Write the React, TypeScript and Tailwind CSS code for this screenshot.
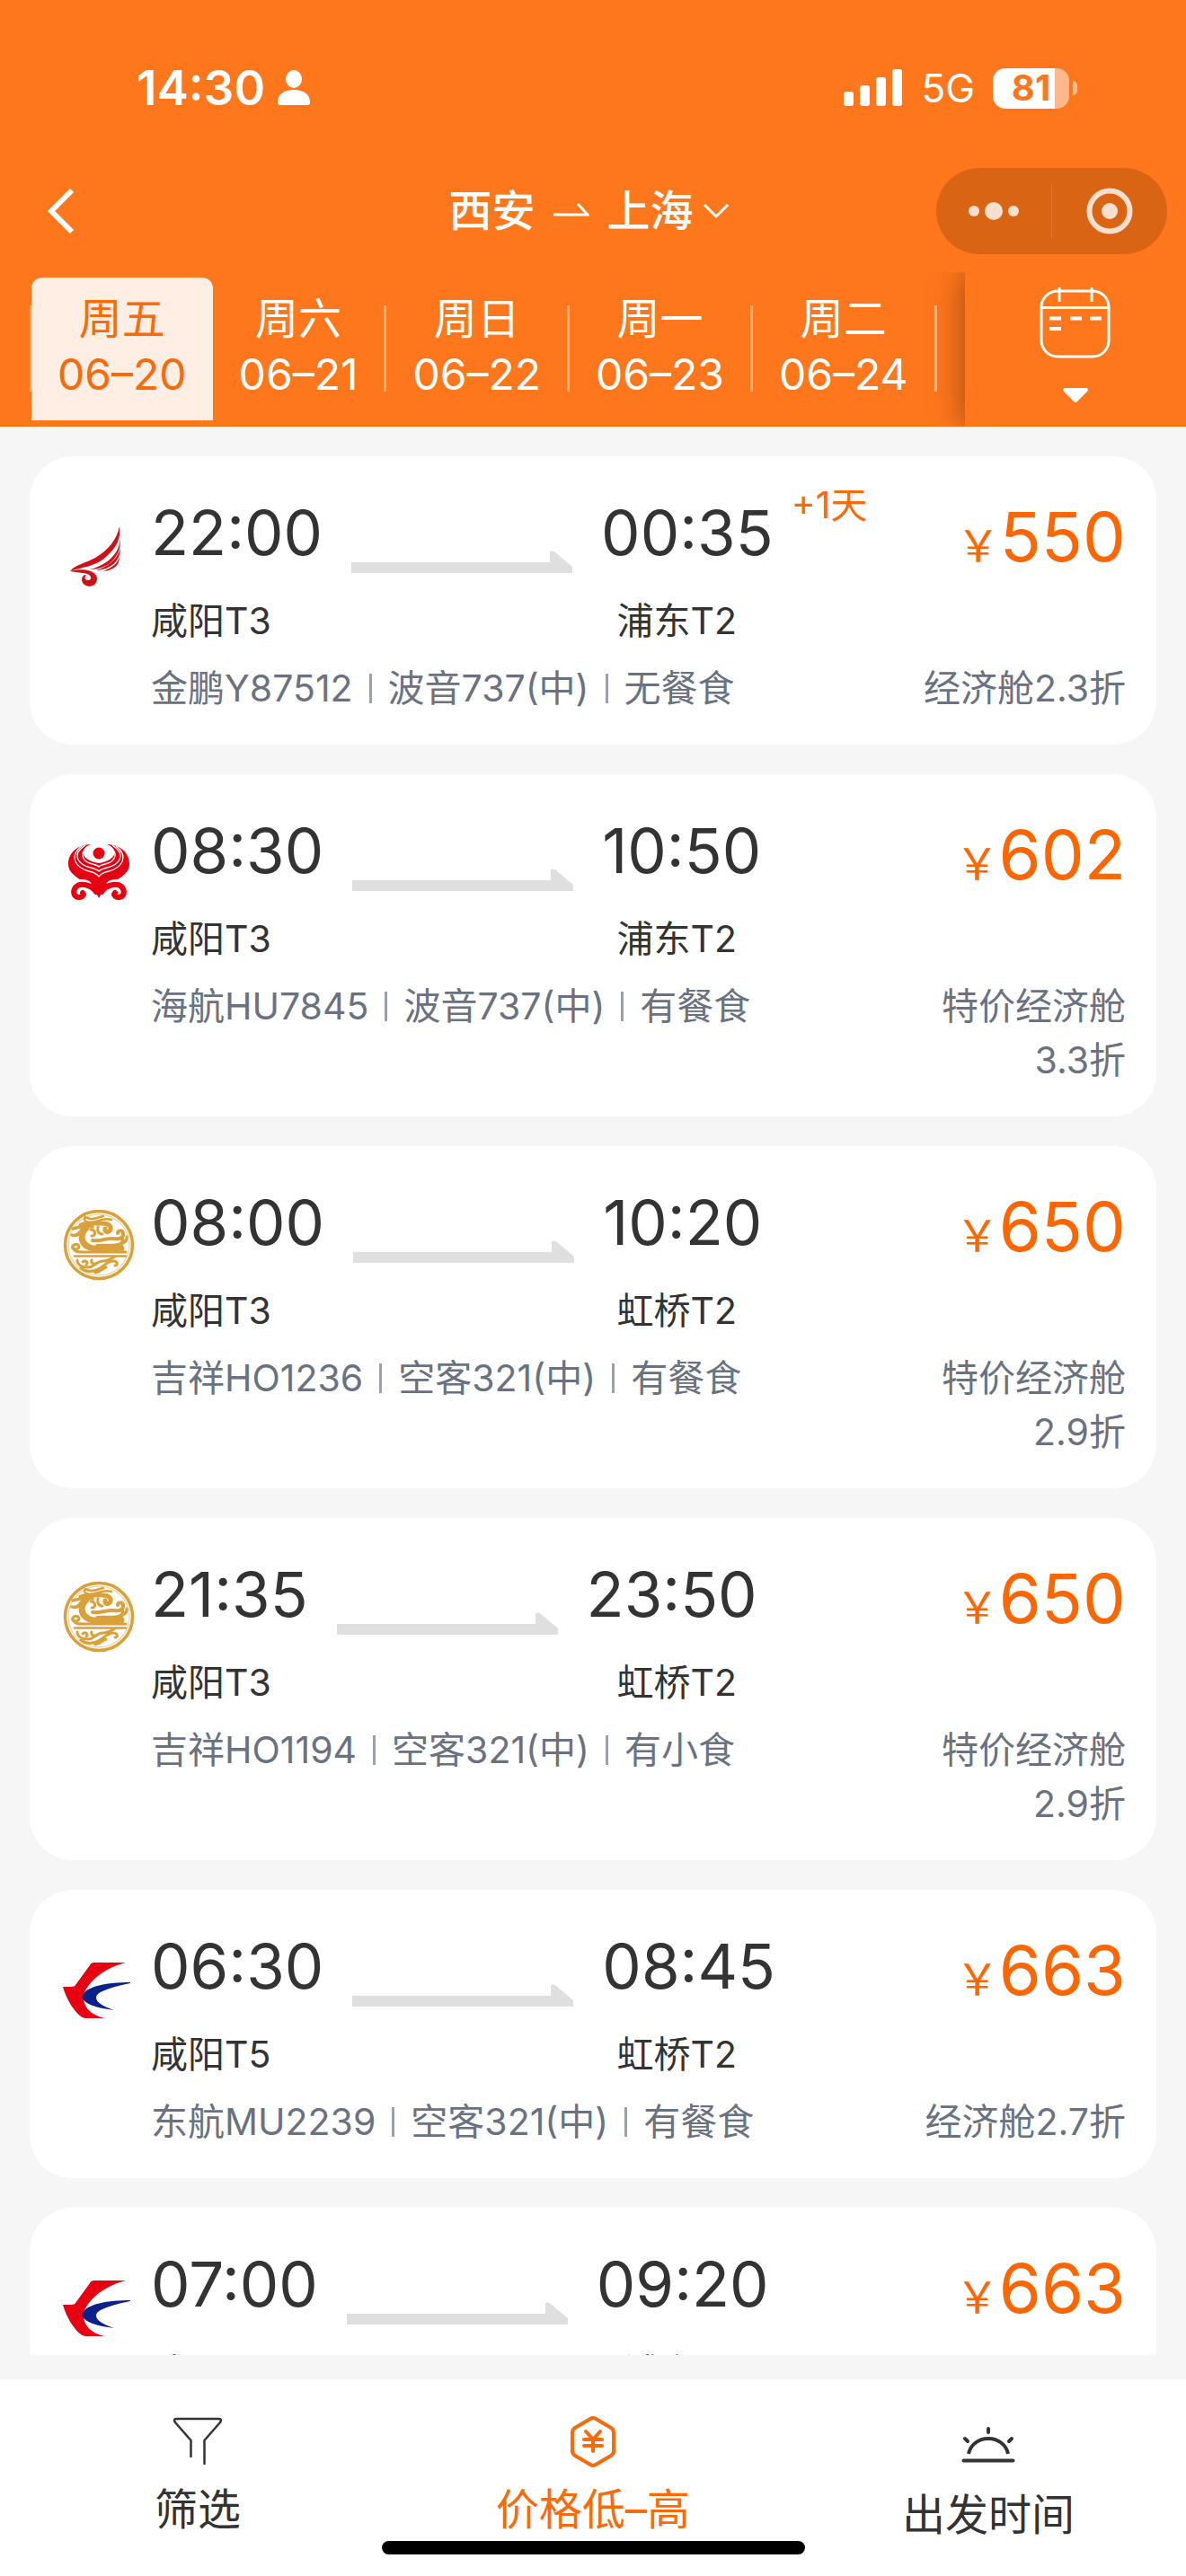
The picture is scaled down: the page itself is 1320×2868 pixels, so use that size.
import React from "react";
import clsx from "clsx";

type Airline = "jinpeng" | "hainan" | "juneyao" | "eastern";

type Flight = {
  airline: Airline;
  depart: string;
  arrive: string;
  plusDay?: string;
  from: string;
  to: string;
  info: string[];
  price: number;
  cabin: string;
};

const DAYS = [
  { week: "周五", date: "06–20" },
  { week: "周六", date: "06–21" },
  { week: "周日", date: "06–22" },
  { week: "周一", date: "06–23" },
  { week: "周二", date: "06–24" },
];

const FLIGHTS: Flight[] = [
  {
    airline: "jinpeng",
    depart: "22:00",
    arrive: "00:35",
    plusDay: "+1天",
    from: "咸阳T3",
    to: "浦东T2",
    info: ["金鹏Y87512", "波音737(中)", "无餐食"],
    price: 550,
    cabin: "经济舱2.3折",
  },
  {
    airline: "hainan",
    depart: "08:30",
    arrive: "10:50",
    from: "咸阳T3",
    to: "浦东T2",
    info: ["海航HU7845", "波音737(中)", "有餐食"],
    price: 602,
    cabin: "特价经济舱3.3折",
  },
  {
    airline: "juneyao",
    depart: "08:00",
    arrive: "10:20",
    from: "咸阳T3",
    to: "虹桥T2",
    info: ["吉祥HO1236", "空客321(中)", "有餐食"],
    price: 650,
    cabin: "特价经济舱2.9折",
  },
  {
    airline: "juneyao",
    depart: "21:35",
    arrive: "23:50",
    from: "咸阳T3",
    to: "虹桥T2",
    info: ["吉祥HO1194", "空客321(中)", "有小食"],
    price: 650,
    cabin: "特价经济舱2.9折",
  },
  {
    airline: "eastern",
    depart: "06:30",
    arrive: "08:45",
    from: "咸阳T5",
    to: "虹桥T2",
    info: ["东航MU2239", "空客321(中)", "有餐食"],
    price: 663,
    cabin: "经济舱2.7折",
  },
  {
    airline: "eastern",
    depart: "07:00",
    arrive: "09:20",
    from: "咸阳T5",
    to: "浦东T1",
    info: ["东航MU2151", "空客321(中)", "有餐食"],
    price: 663,
    cabin: "经济舱2.7折",
  },
];

function StatusBar() {
  return (
    <div className="flex items-center justify-between pt-[62px] pr-[121px] pl-[152px] leading-[72px]">
      <div className="flex items-center gap-3.5">
        <span className="text-[53px] font-semibold">14:30</span>
        <svg width="36" height="40" viewBox="0 0 36 40" fill="currentColor">
          <ellipse cx="18" cy="10" rx="9" ry="10" />
          <path d="M0 36C0 27 7 22 18 22s18 5 18 14c0 2-1 3-3 3H3c-2 0-3-1-3-3Z" />
        </svg>
      </div>
      <div className="flex items-center">
        <svg width="66" height="42" viewBox="0 0 66 42" fill="currentColor">
          <rect x="0" y="25" width="11" height="16" rx="3" />
          <rect x="18" y="18" width="11" height="23" rx="3" />
          <rect x="36" y="9" width="11" height="32" rx="3" />
          <rect x="54" y="0" width="11" height="41" rx="3" />
        </svg>
        <span className="ml-5 text-[44px]">5G</span>
        <div className="ml-5 flex items-center gap-1">
          <div className="flex h-[45px] w-[85px] items-center justify-center rounded-[14px] bg-[linear-gradient(90deg,#fff_81%,#ffb88c_81%)] text-[40px] font-bold text-[#ff771c]">
            81
          </div>
          <div className="h-4 w-[5px] rounded-r-full bg-[#ffb88c]" />
        </div>
      </div>
    </div>
  );
}

function TitleBar() {
  return (
    <div className="mt-[53px] grid h-24 grid-cols-[1fr_auto_1fr] items-center pr-[21px] pl-3">
      <button className="ml-10 justify-self-start" aria-label="返回">
        <svg
          width="32"
          height="52"
          viewBox="0 0 32 52"
          fill="none"
          stroke="currentColor"
          strokeWidth="6"
        >
          <path d="M28 3 5 26l23 23" />
        </svg>
      </button>
      <button className="flex items-center text-[48px] font-medium">
        西安
        <svg
          className="mx-5"
          width="40"
          height="18"
          viewBox="0 0 40 18"
          fill="none"
          stroke="currentColor"
          strokeWidth="3"
        >
          <path d="M0 13h38L27 1" />
        </svg>
        上海
        <svg
          className="ml-2.5"
          width="30"
          height="18"
          viewBox="0 0 30 18"
          fill="none"
          stroke="currentColor"
          strokeWidth="3"
        >
          <path d="m2 2 13 13L28 2" />
        </svg>
      </button>
      <div className="flex h-24 w-[257px] items-center justify-self-end rounded-full bg-[#d86414] text-[#f9dfd0]">
        <button className="flex flex-1 justify-center" aria-label="更多">
          <svg width="60" height="24" viewBox="0 0 60 24" fill="currentColor">
            <circle cx="8" cy="12" r="6" />
            <circle cx="30" cy="12" r="10" />
            <circle cx="52" cy="12" r="6" />
          </svg>
        </button>
        <div className="h-[60px] w-px bg-[#e07c3a]" />
        <button className="flex flex-1 justify-center" aria-label="关闭">
          <svg width="54" height="54" viewBox="0 0 54 54" fill="none">
            <circle
              cx="27"
              cy="27"
              r="22.500"
              stroke="currentColor"
              strokeWidth="6"
            />
            <circle cx="27" cy="27" r="9" fill="currentColor" />
          </svg>
        </button>
      </div>
    </div>
  );
}

function DateTabs() {
  return (
    <div className="mt-5 flex h-[172px] overflow-hidden">
      <div className="ml-[33px] flex flex-1 items-start">
        <div className="mt-[37px] h-24 w-0.5 bg-[#ffb27a]" />
        {DAYS.map((d, i) => (
          <React.Fragment key={d.date}>
            <button
              className={clsx(
                "mt-1.5 flex h-[159px] flex-col items-center px-[29px] pt-[15px] text-[48px] leading-[62px]",
                i === 0 && "rounded-t-xl bg-[#ffeee4] text-[#f96a0a]",
              )}
            >
              <span>{d.week}</span>
              <span>{d.date}</span>
            </button>
            {i > 0 && <div className="mt-[37px] h-24 w-[3px] bg-[#ffb27a]" />}
          </React.Fragment>
        ))}
      </div>
      <button
        className="flex w-[246px] flex-col items-center pt-4 shadow-[0_0_36px_0_rgba(0,0,0,0.4)]"
        aria-label="选择日期"
      >
        <svg
          width="80"
          height="80"
          viewBox="0 0 80 80"
          fill="none"
          stroke="currentColor"
          strokeWidth="3"
        >
          <rect x="2" y="5" width="75" height="73" rx="18" />
          <path d="M2 23.500h75M22 1v16M58 1v16" />
          <path d="M11 35.500h13M34 35.500h13M56 35.500h13M11 47h13" strokeWidth="4" />
        </svg>
        <svg
          className="mt-8"
          width="30"
          height="18"
          viewBox="0 0 30 18"
          fill="currentColor"
          stroke="currentColor"
          strokeWidth="4"
          strokeLinejoin="round"
        >
          <path d="M3 3h24L15 15Z" />
        </svg>
      </button>
    </div>
  );
}

function AirlineLogo({ airline }: { airline: Airline }) {
  if (airline === "jinpeng") {
    return (
      <svg width="80" height="80" viewBox="0 0 80 80" fill="none">
        <g fill="#cf1016">
          <path d="M63 8C60 23 50 35 36 43 25 49 13 51 8 58c14-5 29-5 41-17C59 32 65 22 63 8Z" />
          <path d="M64 21c-1 17-14 30-34 35 22 0 35-15 34-35Z" />
          <path d="M64 32c-3 12-13 21-27 25 17-1 27-11 27-25Z" />
          <path d="M63 42c-2 8-9 12-18 16 12-1 18-7 18-16Z" />
          <path d="M8 58c10-3 29-3 30 8 0 8-8 11-14 7-5-4-3-12 2-11-3 3-1 6 2 6 4 0 4-4 1-6-4-3-13-2-21-4Z" />
        </g>
      </svg>
    );
  }
  if (airline === "hainan") {
    return (
      <svg width="80" height="80" viewBox="0 0 80 80" fill="none">
        <path
          fill="#e60012"
          d="M31 8C14 9 6 19 6 30c0 16 24 18 34 36 10-18 34-20 34-36C74 19 66 9 49 8c12 5 13 17-9 21C18 25 19 13 31 8Z"
        />
        <circle cx="40" cy="18" r="6.500" fill="#e60012" />
        <g stroke="#fff" strokeWidth="1.300">
          <path d="M25 9C8 20 18 31 31 34c4 1 7 2 9 4 2-2 5-3 9-4 13-3 23-14 6-25" />
          <path d="M21 10C6 21 14 34 29 38c5 1 9 3 11 6 2-3 6-5 11-6 15-4 23-17 8-28" />
          <path d="M28 10c-12 10-4 18 5 20 4 1 6 2 7 3 1-1 3-2 7-3 9-2 17-10 5-20" />
        </g>
        <g stroke="#fff" strokeWidth="8">
          <path d="M37 64C33 52 20 47 13 55" />
          <path d="M43 64c4-12 17-17 24-9" />
        </g>
        <path d="M29 47h22L40 68Z" fill="#e60012" />
        <g stroke="#e60012" strokeWidth="6" strokeLinecap="round">
          <path d="M37 61C32 53 19 50 14 56c-4 6-1 11 4 11 4 0 6-3 4-5" />
          <path d="M43 61c5-8 18-11 23-5 4 6 1 11-4 11-4 0-6-3-4-5" />
        </g>
      </svg>
    );
  }
  if (airline === "juneyao") {
    return (
      <svg
        width="80"
        height="80"
        viewBox="0 0 80 80"
        fill="none"
        stroke="#d9a13b"
        strokeLinecap="round"
        strokeLinejoin="round"
      >
        <circle cx="40" cy="40" r="37.500" strokeWidth="3.500" />
        <circle cx="40" cy="40" r="34" stroke="#f0d9ab" strokeWidth="1.500" />
        <path d="M54 12c-9-3-16 3-23 3-5 0-9-3-6-6 6 4 13 1 20-1" strokeWidth="2.500" />
        <path d="M20 18c6-3 14-2 22-2 8 0 12 2 11 7-2 4-7 3-6-1" strokeWidth="5" />
        <path d="M11 22c8-2 15-4 22-2M10 29c5 2 8-1 11-6" strokeWidth="3.500" />
        <path d="M26 21c-8 8-6 18 4 22 10 3 24 2 34 0" strokeWidth="7" />
        <path d="M31 23c6 0 6 7 1 7M39 20c-1 5 1 8 5 8" strokeWidth="3" />
        <path d="M33 35c10 1 16-3 24-2 6 1 11-1 10-6-1-4-6-3-6 0M38 41c10-1 20 1 26-2 5-3 3-7-2-6" strokeWidth="4" />
        <path d="M71 31c1 5-3 7-7 8M60 40c5 0 9 3 6 6" strokeWidth="3" />
        <path d="M11 41c4-4 9 0 6 3-4 2-8 0-6-3 0 8 8 7 16 7h43" strokeWidth="3" />
        <path d="M13 52.500h57" strokeWidth="2.500" />
        <path d="M16 57c0 6 7 8 12 8 8 0 8-7 17-7 6 0 9-3 13-5" strokeWidth="3" />
        <path d="M22 59c3-3 7 1 4 3M32 57c-1 3 2 5 5 4M20 66c8 6 16 3 21 0 5-3 9-8 15-8 5 0 6 5 2 5M36 71c6-1 8-5 12-6" strokeWidth="3" />
      </svg>
    );
  }
  return (
    <svg width="80" height="80" viewBox="0 0 80 80" fill="none">
      <path
        fill="#e60012"
        d="M70 11H35c-3 0-4 1-5 3L14 36c-1 2-3 2-14 2 4 14 12 27 20 33 3 2 5 2 8 2h18C30 69 22 60 23 47 28 32 46 17 70 11Z"
      />
      <path
        fill="#0b2088"
        d="M75 33c-24 0-50 4-53 15-2 9 18 14 35 16-14-5-20-9-20-14 0-7 19-12 38-16Z"
      />
    </svg>
  );
}

function FlightCard({ flight }: { flight: Flight }) {
  return (
    <li className="flex shrink-0 gap-[18px] rounded-[48px] bg-white pt-10 pr-[34px] pb-[33px] pl-[37px]">
      <div className="pt-[30px]">
        <AirlineLogo airline={flight.airline} />
      </div>
      <div className="flex-1 text-[41px] leading-[60px]">
        <div className="flex h-[90px] items-start justify-between leading-[90px]">
          <div className="flex h-full items-start text-[69px]">
            <span>{flight.depart}</span>
            <svg
              className="mx-8 self-end"
              width="246"
              height="25"
              viewBox="0 0 246 25"
              fill="#dfdfdf"
            >
              <path d="M0 13h221V2c0-2 4-2 6 0l19 16v7H0Z" />
            </svg>
            <span>{flight.arrive}</span>
            {flight.plusDay && (
              <span className="ml-5 text-[41px] leading-7 text-[#f96a0a]">
                {flight.plusDay}
              </span>
            )}
          </div>
          <div className="flex items-baseline pt-1 text-[#ff6600]">
            <span className="text-[48px]">{"\uFFE5"}</span>
            <span className="text-[76px]">{flight.price}</span>
          </div>
        </div>
        <div className="mt-[23px] flex w-[652px] justify-between text-[#333333]">
          <span>{flight.from}</span>
          <span>{flight.to}</span>
        </div>
        <div className="mt-[15px] flex justify-between text-gray-500">
          <div className="flex items-start">
            {flight.info.map((part, i) => (
              <React.Fragment key={part}>
                {i > 0 && (
                  <span className="mx-[18px] mt-3.5 h-[33px] w-[3px] bg-gray-400" />
                )}
                <span>{part}</span>
              </React.Fragment>
            ))}
          </div>
          <div className="max-w-[250px] text-right">{flight.cabin}</div>
        </div>
      </div>
    </li>
  );
}

function BottomBar() {
  return (
    <nav className="bg-white pb-6">
      <div className="grid h-[180px] grid-cols-3 text-[48px] leading-[60px]">
        <button className="flex flex-col items-center pt-10">
          <svg
            width="56"
            height="60"
            viewBox="0 0 56 60"
            fill="none"
            stroke="currentColor"
            strokeWidth="2.500"
            strokeLinecap="round"
            strokeLinejoin="round"
          >
            <path d="M20.500 46V28L3 8C1 5 2 4 5 4h46c3 0 4 1 2 4L35.500 28v26" />
          </svg>
          <span className="mt-[15px]">筛选</span>
        </button>
        <button className="flex flex-col items-center pt-10 text-[#f96a0a]">
          <svg
            width="56"
            height="60"
            viewBox="0 0 56 60"
            fill="none"
            stroke="currentColor"
            strokeWidth="4"
            strokeLinecap="round"
            strokeLinejoin="round"
          >
            <path d="M25 4Q28 2 31 4L48 14Q51 16 51 19V40Q51 43 48 45L31 55Q28 57 25 55L8 45Q5 43 5 40V19Q5 16 8 14Z" />
            <path d="M20 18l8 9 8-9M18 27h20M18 34h20M28 27v13" />
          </svg>
          <span className="mt-[15px]">价格低–高</span>
        </button>
        <button className="flex flex-col items-center pt-[46px]">
          <svg
            width="60"
            height="60"
            viewBox="0 0 60 60"
            fill="none"
            stroke="currentColor"
            strokeWidth="4"
            strokeLinecap="round"
          >
            <path d="M2.500 44.500h55M30 9v4M4 20l3 3M56 20l-3 3" />
            <path d="M8 37C10 27 19 20 30 20s20 7 22 17" strokeLinecap="butt" />
          </svg>
          <span className="mt-[15px]">出发时间</span>
        </button>
      </div>
      <div className="mx-auto h-[15px] w-[471px] rounded-full bg-black" />
    </nav>
  );
}

export default function App() {
  return (
    <div className="flex h-screen flex-col overflow-hidden bg-[#f6f6f6] font-['Inter','Noto_Sans_CJK_SC',sans-serif] text-[#333333]">
      <header className="shrink-0 bg-[#ff771c] text-white">
        <StatusBar />
        <TitleBar />
        <DateTabs />
      </header>
      <main className="mb-[27px] min-h-0 flex-1 overflow-hidden px-[33px] pt-[33px]">
        <ul className="flex flex-col gap-[33px]">
          {FLIGHTS.map((flight) => (
            <FlightCard key={flight.depart + flight.info[0]} flight={flight} />
          ))}
        </ul>
      </main>
      <BottomBar />
    </div>
  );
}
